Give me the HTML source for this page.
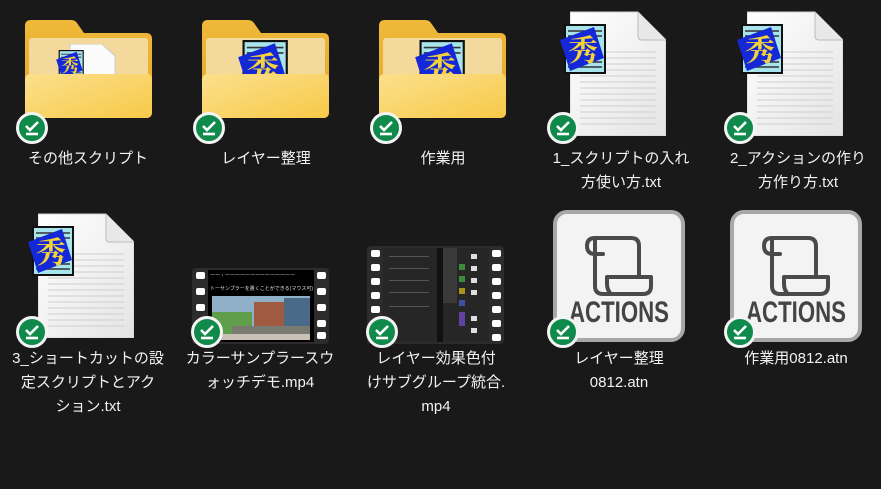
<!DOCTYPE html>
<html><head><meta charset="utf-8"><style>
body{margin:0;width:881px;height:489px;background:#191919;overflow:hidden;position:relative;font-family:"Liberation Sans","Noto Sans CJK JP",sans-serif;}
.a{position:absolute}
.t{position:absolute;width:170px;text-align:center;color:#f2f2f2;font-size:15px;line-height:24px}
.b{position:absolute;width:26px;height:26px;border-radius:50%;background:#0f8a4a;border:3px solid #f4f4f4}
</style></head><body>
<svg width="0" height="0" style="position:absolute"><defs>
<linearGradient id="fb" x1="0" y1="0" x2="0" y2="1"><stop offset="0" stop-color="#f0b93a"/><stop offset="1" stop-color="#e4a624"/></linearGradient>
<linearGradient id="ff" x1="0" y1="0" x2="1" y2="1"><stop offset="0" stop-color="#fbe08c"/><stop offset="1" stop-color="#f7c948"/></linearGradient>
<linearGradient id="pg" x1="0" y1="0" x2="1" y2="1"><stop offset="0" stop-color="#ffffff"/><stop offset="1" stop-color="#e4e4e4"/></linearGradient>
<symbol id="hid" viewBox="0 0 46 50">
<rect x="5" y="1" width="40" height="48" fill="#a8e4ec" stroke="#111" stroke-width="2"/>
<g stroke="#333" stroke-width="1.5"><line x1="8" y1="7" x2="42" y2="7"/><line x1="8" y1="12" x2="42" y2="12"/><line x1="8" y1="38" x2="42" y2="38"/><line x1="8" y1="43" x2="42" y2="43"/></g>
<polygon points="0,16 34,3 44,34 10,47" fill="#1428d8"/>
<text x="23" y="37" font-size="30" fill="#f4d23a" text-anchor="middle" font-family="Noto Serif CJK SC,serif" font-weight="bold">秀</text>
</symbol>
<symbol id="fld" viewBox="0 0 127 98">
<path d="M0 6 Q0 0 6 0 H46 Q50 0 52 3 L59 13 H121 Q127 13 127 19 V92 Q127 98 121 98 H6 Q0 98 0 92Z" fill="url(#fb)"/>
<rect x="4" y="18" width="119" height="44" rx="3" fill="#f3d99b"/>
</symbol>
<symbol id="ffr" viewBox="0 0 127 46">
<path d="M0 8 Q0 2 6 2 H121 Q127 1 127 8 V40 Q127 46 121 46 H6 Q0 46 0 40Z" fill="url(#ff)"/>
</symbol>
<symbol id="doc" viewBox="0 0 96 126">
<path d="M0 2 H68 L96 30 V126 H0Z" fill="url(#pg)" stroke="#cfcfcf"/>
<path d="M68 2 V26 Q68 30 72 30 H96" fill="#e8e8e8" stroke="#bbb"/>
<g stroke="#cfcfcf" stroke-width="1"><path d="M10 42H86M10 48H86M10 54H86M10 60H86M10 66H86M10 72H86M10 78H86M10 84H86M10 90H86M10 96H86M10 102H86M10 108H86M10 114H86"/></g>
</symbol>
<symbol id="act" viewBox="0 0 132 132">
<rect x="2" y="2" width="128" height="128" rx="12" fill="#f3f3f3" stroke="#a8a8a8" stroke-width="4"/>
<g fill="none" stroke="#4a4a4a" stroke-width="4" stroke-linejoin="round" stroke-linecap="round">
<path d="M42 44 Q34 44 34 36 Q34 28 42 28 H78 Q86 28 86 36 V66"/>
<path d="M42 30 V76 Q42 84 50 84 H58"/>
<path d="M58 84 Q54 80 54 74 V67 H98 V76 Q98 84 90 84 H58"/>
<path d="M42 44 H50"/>
</g>
<text x="66" y="112" font-size="30" font-weight="bold" fill="#444" text-anchor="middle" font-family="Liberation Sans Narrow,sans-serif" textLength="100" lengthAdjust="spacingAndGlyphs">ACTIONS</text>
</symbol>
<symbol id="chk" viewBox="0 0 26 26"><path d="M7 11 L11 15 L19 7" fill="none" stroke="#fff" stroke-width="2.6"/><path d="M7 19H19" stroke="#fff" stroke-width="2.6"/></symbol>
</defs></svg>

<svg class="a" style="left:25px;top:20px" width="127" height="98"><use href="#fld"/></svg>
<svg class="a" style="left:62px;top:44px" width="55" height="40" viewBox="0 0 55 40"><path d="M8 0H40L53 12V40H8Z" fill="#fbfbfb" stroke="#ccc"/></svg>
<svg class="a" style="left:56px;top:50px" width="28" height="30"><use href="#hid"/></svg>
<svg class="a" style="left:25px;top:72px" width="127" height="46"><use href="#ffr"/></svg>
<svg class="a" style="left:202px;top:20px" width="127" height="98"><use href="#fld"/></svg>
<svg class="a" style="left:232px;top:40px" width="62" height="54"><use href="#hid"/></svg>
<svg class="a" style="left:202px;top:72px" width="127" height="46"><use href="#ffr"/></svg>
<svg class="a" style="left:379px;top:20px" width="127" height="98"><use href="#fld"/></svg>
<svg class="a" style="left:409px;top:40px" width="62" height="54"><use href="#hid"/></svg>
<svg class="a" style="left:379px;top:72px" width="127" height="46"><use href="#ffr"/></svg>
<svg class="a" style="left:570px;top:10px" width="96" height="126"><use href="#doc"/></svg>
<svg class="a" style="left:560px;top:24px" width="46" height="50"><use href="#hid"/></svg>
<svg class="a" style="left:747px;top:10px" width="96" height="126"><use href="#doc"/></svg>
<svg class="a" style="left:737px;top:24px" width="46" height="50"><use href="#hid"/></svg>
<svg class="a" style="left:38px;top:212px" width="96" height="126"><use href="#doc"/></svg>
<svg class="a" style="left:28px;top:226px" width="46" height="50"><use href="#hid"/></svg>
<svg class="a" style="left:192px;top:268px" width="137" height="76" viewBox="0 0 137 76">
<rect width="137" height="76" rx="4" fill="#2c2c2c"/>
<rect x="16" y="2" width="106" height="72" fill="#000"/>
<text x="18" y="9" font-size="5" fill="#ddd">ーー・ーーーーーーーーーーーーーー</text>
<text x="18" y="22" font-size="5" fill="#ddd">トーサンプラーを置くことができる(マウス可)</text>
<rect x="20" y="28" width="98" height="44" fill="#8fb0c8"/>
<rect x="20" y="44" width="40" height="22" fill="#5f9e4a"/>
<rect x="62" y="34" width="30" height="28" fill="#a05a40"/>
<rect x="92" y="30" width="26" height="34" fill="#4a6a8a"/>
<rect x="40" y="58" width="78" height="10" fill="#7a7a72"/>
<rect x="20" y="66" width="98" height="6" fill="#c9c0b8"/>
<g fill="#fff"><rect x="4" y="4" width="9" height="7" rx="2"/><rect x="4" y="20" width="9" height="7" rx="2"/><rect x="4" y="36" width="9" height="7" rx="2"/><rect x="125" y="4" width="9" height="7" rx="2"/><rect x="125" y="20" width="9" height="7" rx="2"/><rect x="125" y="36" width="9" height="7" rx="2"/><rect x="125" y="52" width="9" height="7" rx="2"/><rect x="125" y="64" width="9" height="7" rx="2"/></g>
</svg>
<svg class="a" style="left:367px;top:246px" width="137" height="98" viewBox="0 0 137 98">
<rect width="137" height="98" rx="4" fill="#2c2c2c"/>
<rect x="16" y="2" width="106" height="94" fill="#262626"/>
<rect x="70" y="2" width="6" height="94" fill="#111"/>
<rect x="76" y="2" width="14" height="55" fill="#3a3a3a"/>
<g fill="#555"><rect x="22" y="10" width="40" height="1"/><rect x="22" y="22" width="40" height="1"/><rect x="22" y="34" width="40" height="1"/><rect x="22" y="46" width="40" height="1"/><rect x="22" y="60" width="40" height="1"/></g>
<rect x="92" y="18" width="6" height="6" fill="#3c8a3c"/><rect x="92" y="30" width="6" height="6" fill="#3c8a3c"/><rect x="92" y="42" width="6" height="6" fill="#a89020"/><rect x="92" y="54" width="6" height="6" fill="#4050a0"/><rect x="92" y="66" width="6" height="14" fill="#6040a0"/>
<g fill="#ddd"><rect x="104" y="8" width="6" height="5"/><rect x="104" y="20" width="6" height="5"/><rect x="104" y="32" width="6" height="5"/><rect x="104" y="44" width="6" height="5"/><rect x="104" y="70" width="6" height="5"/><rect x="104" y="82" width="6" height="5"/></g>
<g fill="#fff"><rect x="4" y="4" width="9" height="7" rx="2"/><rect x="4" y="18" width="9" height="7" rx="2"/><rect x="4" y="32" width="9" height="7" rx="2"/><rect x="4" y="46" width="9" height="7" rx="2"/><rect x="4" y="60" width="9" height="7" rx="2"/><rect x="125" y="4" width="9" height="7" rx="2"/><rect x="125" y="18" width="9" height="7" rx="2"/><rect x="125" y="32" width="9" height="7" rx="2"/><rect x="125" y="46" width="9" height="7" rx="2"/><rect x="125" y="60" width="9" height="7" rx="2"/><rect x="125" y="74" width="9" height="7" rx="2"/><rect x="125" y="88" width="9" height="7" rx="2"/></g>
</svg>
<svg class="a" style="left:553px;top:210px" width="132" height="132"><use href="#act"/></svg>
<svg class="a" style="left:730px;top:210px" width="132" height="132"><use href="#act"/></svg>

<div class="b" style="left:16px;top:112px"><svg width="26" height="26"><use href="#chk"/></svg></div>
<div class="b" style="left:193px;top:112px"><svg width="26" height="26"><use href="#chk"/></svg></div>
<div class="b" style="left:370px;top:112px"><svg width="26" height="26"><use href="#chk"/></svg></div>
<div class="b" style="left:547px;top:112px"><svg width="26" height="26"><use href="#chk"/></svg></div>
<div class="b" style="left:724px;top:112px"><svg width="26" height="26"><use href="#chk"/></svg></div>
<div class="b" style="left:16px;top:316px"><svg width="26" height="26"><use href="#chk"/></svg></div>
<div class="b" style="left:191px;top:316px"><svg width="26" height="26"><use href="#chk"/></svg></div>
<div class="b" style="left:366px;top:316px"><svg width="26" height="26"><use href="#chk"/></svg></div>
<div class="b" style="left:547px;top:316px"><svg width="26" height="26"><use href="#chk"/></svg></div>
<div class="b" style="left:724px;top:316px"><svg width="26" height="26"><use href="#chk"/></svg></div>

<div class="t" style="left:3px;top:147px">その他スクリプト</div>
<div class="t" style="left:181px;top:147px">レイヤー整理</div>
<div class="t" style="left:358px;top:147px">作業用</div>
<div class="t" style="left:536px;top:147px">1_スクリプトの入れ<br>方使い方.txt</div>
<div class="t" style="left:713px;top:147px">2_アクションの作り<br>方作り方.txt</div>
<div class="t" style="left:3px;top:347px">3_ショートカットの設<br>定スクリプトとアク<br>ション.txt</div>
<div class="t" style="left:175px;top:347px">カラーサンプラースウ<br>ォッチデモ.mp4</div>
<div class="t" style="left:351px;top:347px">レイヤー効果色付<br>けサブグループ統合.<br>mp4</div>
<div class="t" style="left:534px;top:347px">レイヤー整理<br>0812.atn</div>
<div class="t" style="left:711px;top:347px">作業用0812.atn</div>
</body></html>
